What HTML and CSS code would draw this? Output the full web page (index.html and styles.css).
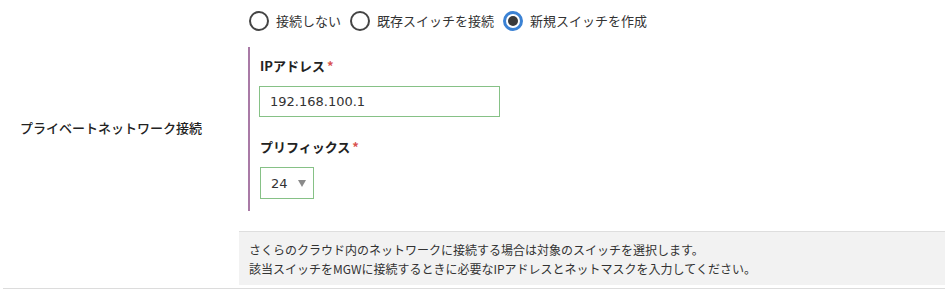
FILE: index.html
```html
<!DOCTYPE html>
<html lang="ja">
<head>
<meta charset="utf-8">
<link rel="stylesheet" href="styles.css">
</head>
<body>
<div class="row">
  <div class="row-label">プライベートネットワーク接続</div>
  <div class="row-body">
    <div class="radios">
      <label class="radio"><span class="circle"></span><span class="rtext">接続しない</span></label>
      <label class="radio"><span class="circle"></span><span class="rtext">既存スイッチを接続</span></label>
      <label class="radio"><span class="circle checked"><span class="dot"></span></span><span class="rtext">新規スイッチを作成</span></label>
    </div>
    <div class="group">
      <div class="field-label">IPアドレス<span class="req">*</span></div>
      <div class="input">192.168.100.1</div>
      <div class="field-label second">プリフィックス<span class="req">*</span></div>
      <div class="select"><span class="sval">24</span><span class="arrow"></span></div>
    </div>
    <div class="info">
      <p>さくらのクラウド内のネットワークに接続する場合は対象のスイッチを選択します。</p>
      <p>該当スイッチをMGWに接続するときに必要なIPアドレスとネットマスクを入力してください。</p>
    </div>
  </div>
</div>
</body>
</html>
```
FILE: styles.css
```css
html, body {
  margin: 0;
  padding: 0;
  background: #fff;
}
body {
  font-family: "Noto Sans CJK JP", "Noto Sans", sans-serif;
  color: #333;
  font-size: 13px;
}
.row {
  display: flex;
  margin: 0 6px 0 3px;
  border-bottom: 1px solid #dcdcdc;
  padding-bottom: 1px;
}
.row-label {
  width: 219px;
  padding-left: 17px;
  padding-top: 118px;
  line-height: 20px;
  font-size: 13px;
  color: #222;
  font-weight: 500;
  flex: none;
}
.row-body {
  flex: 1;
  display: flex;
  flex-direction: column;
}
.radios {
  display: flex;
  align-items: center;
  padding: 11px 0 0 10px;
  height: 20px;
}
.radio {
  display: flex;
  align-items: center;
  margin-right: 9px;
}
.circle {
  box-sizing: border-box;
  width: 20px;
  height: 20px;
  border: 2px solid #444;
  border-radius: 50%;
  display: flex;
  align-items: center;
  justify-content: center;
}
.circle.checked {
  border: 3px solid #3b82d4;
}
.dot {
  width: 10px;
  height: 10px;
  border-radius: 50%;
  background: #3a3a3a;
}
.rtext {
  margin-left: 7px;
  line-height: 20px;
  color: #333;
}
.group {
  margin: 16px 0 0 9px;
  border-left: 2px solid #a97aa6;
  padding: 9px 0 12px 10px;
  display: flex;
  flex-direction: column;
  align-items: flex-start;
}
.field-label {
  font-weight: bold;
  line-height: 20px;
  color: #222;
}
.field-label.second {
  margin-top: 20px;
}
.req {
  color: #d9534f;
  margin-left: 2px;
}
.input {
  box-sizing: border-box;
  margin-top: 10px;
  margin-left: -1px;
  width: 241px;
  height: 31px;
  border: 1px solid #86c186;
  padding-left: 10px;
  font-family: "DejaVu Sans", sans-serif;
  font-size: 13px;
  line-height: 29px;
  color: #333;
}
.select {
  box-sizing: border-box;
  margin-top: 10px;
  width: 54px;
  height: 32px;
  border: 1px solid #86c186;
  display: flex;
  align-items: center;
  padding-left: 10px;
  font-family: "DejaVu Sans", sans-serif;
  font-size: 13px;
  color: #333;
}
.arrow {
  margin-left: 10px;
  margin-top: 1px;
  width: 0;
  height: 0;
  border-left: 4px solid transparent;
  border-right: 4px solid transparent;
  border-top: 7px solid #8a8a8a;
}
.info {
  margin-top: 20px;
  margin-bottom: 2px;
  background: #f2f2f2;
  border-top: 1px solid #dedede;
  padding: 8px 10px 7px 10px;
  font-size: 12px;
  line-height: 19px;
  color: #333;
}
.info p {
  margin: 0;
}
```
